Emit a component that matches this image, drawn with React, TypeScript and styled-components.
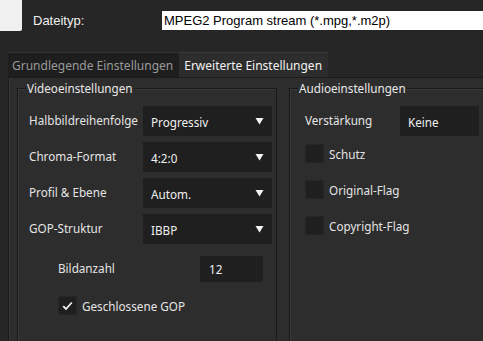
import styled, { createGlobalStyle } from "styled-components";

const GlobalStyle = createGlobalStyle`
  html, body {
    margin: 0;
    padding: 0;
    background: #262626;
    overflow: hidden;
  }
  body {
    width: 483px;
    height: 341px;
    font-family: "Noto Sans", "Open Sans", sans-serif;
    font-size: 11.7px;
    color: #e4e4e4;
  }
`

const Window = styled.div`
  width: 483px;
  height: 341px;
  overflow: hidden;
  display: flex;
  flex-direction: column;
`

const Header = styled.div`
  height: 52px;
  flex-shrink: 0;
  display: flex;
  align-items: flex-start;
`

const Corner = styled.div`
  width: 22px;
  height: 31px;
  flex-shrink: 0;
  background: #f0f0f0;
  border-bottom-right-radius: 2px;
`

const HeaderLabel = styled.span`
  margin: 11px 0 0 11px;
  width: 129px;
  flex-shrink: 0;
  line-height: 19px;
  font-family: "Liberation Sans", Arial, sans-serif;
  font-size: 13px;
  color: #f0f0f0;
`

const FileType = styled.div`
  flex: 1;
  margin-top: 11px;
  height: 19px;
  padding-left: 2px;
  background: #ffffff;
  font-family: "Liberation Sans", Arial, sans-serif;
  font-size: 13px;
  line-height: 19px;
  color: #000;
  white-space: nowrap;
`

const TabBar = styled.div`
  display: flex;
  flex-shrink: 0;
  height: 25px;
  margin-left: 8px;
`

const Tab = styled.div<{ $active?: boolean }>`
  height: 25px;
  padding: 0 6px 0 ${p => (p.$active ? 5 : 4)}px;
  display: flex;
  align-items: center;
  white-space: nowrap;
  font-size: 12px;
  background: ${p => (p.$active ? "#2d2d2d" : "#1e1e1e")};
  color: ${p => (p.$active ? "#f2f2f2" : "#9a9a9a")};
  border-top: 1px solid ${p => (p.$active ? "#3a3a3a" : "#333")};
  box-sizing: border-box;
`

const Panel = styled.div`
  flex: 1;
  margin-left: 8px;
  background: #2d2d2d;
  border-left: 1px solid #1c1c1c;
  border-top: 1px solid #1c1c1c;
  box-shadow: inset 1px 0 0 #363636;
  display: flex;
  gap: 12px;
  padding: 2px 0 0 8px;
`

const Group = styled.fieldset<{ $width?: number; $pad: number }>`
  margin: 0;
  ${p => (p.$width ? `width: ${p.$width}px;` : "flex: 1;")}
  flex-shrink: 0;
  height: 320px;
  box-sizing: border-box;
  padding: 0 4px 0 ${p => p.$pad}px;
  border: 1px solid #1a1a1a;
  border-right: none;
  border-bottom: none;
  box-shadow: inset 1px 1px 0 #393939;
  display: flex;
  flex-direction: column;
  ${p => (p.$width ? "border-right: 1px solid #1a1a1a;" : "")}

  legend {
    margin-left: ${p => 8 - p.$pad}px;
  }
`

const Legend = styled.legend`
  padding: 0 1px;
  line-height: 16px;
  font-size: 11.7px;
  color: #e8e8e8;
  background: #2d2d2d;
`

const Rows = styled.div`
  display: flex;
  flex-direction: column;
  gap: 6px;
  padding-top: 10px;
`

const Row = styled.div<{ $indent?: number; $top?: number }>`
  display: flex;
  align-items: center;
  margin-left: ${p => p.$indent ?? 0}px;
  margin-top: ${p => p.$top ?? 0}px;
`

const Label = styled.span<{ $width: number }>`
  width: ${p => p.$width}px;
  flex-shrink: 0;
  white-space: nowrap;
  margin-top: -3px;
`

const Select = styled.div<{ $grow?: boolean }>`
  ${p => (p.$grow ? "flex: 1;" : "width: 129px;")}
  height: 30px;
  box-sizing: border-box;
  padding: 0 8px 0 8px;
  background: #1f1f1f;
  display: flex;
  align-items: center;
  justify-content: space-between;
  color: #f0f0f0;
  span {
    margin-top: 2px;
  }
`

const NumberBox = styled.div`
  width: 63px;
  height: 26px;
  box-sizing: border-box;
  padding-left: 9px;
  background: #1f1f1f;
  display: flex;
  align-items: center;
  color: #f0f0f0;
`

const CheckRow = styled.div<{ $indent?: number; $top?: number }>`
  display: flex;
  align-items: center;
  gap: 5px;
  height: 19px;
  margin-left: ${p => p.$indent ?? 0}px;
  margin-top: ${p => p.$top ?? 0}px;
`

const Box = styled.div`
  width: 19px;
  height: 19px;
  box-sizing: border-box;
  background: #1f1f1f;
  border: 1px solid #262626;
  display: flex;
  align-items: center;
  justify-content: center;
`

const CheckList = styled.div`
  display: flex;
  flex-direction: column;
  gap: 17px;
  margin-top: 2px;
`

function Arrow() {
  return (
    <svg width="9" height="8" viewBox="0 0 9 8">
      <path d="M0.5 1 L8.5 1 L4.5 7.5 Z" fill="#f4f4f4" />
    </svg>
  )
}

function Check({ checked }: { checked?: boolean }) {
  return (
    <Box>
      {checked && (
        <svg width="11" height="10" viewBox="0 0 11 10">
          <path d="M1.2 5.2 L4 8 L9.8 1.5" stroke="#f2f2f2" strokeWidth="1.8" fill="none" />
        </svg>
      )}
    </Box>
  )
}

export default function App() {
  return (
    <Window>
      <GlobalStyle />
      <Header>
        <Corner />
        <HeaderLabel>Dateityp:</HeaderLabel>
        <FileType>MPEG2 Program stream (*.mpg,*.m2p)</FileType>
      </Header>

      <TabBar>
        <Tab>Grundlegende Einstellungen</Tab>
        <Tab $active>Erweiterte Einstellungen</Tab>
      </TabBar>

      <Panel>
        <Group $width={260} $pad={11}>
          <Legend>Videoeinstellungen</Legend>
          <Rows>
            <Row>
              <Label $width={114}>Halbbildreihenfolge</Label>
              <Select><span>Progressiv</span><Arrow /></Select>
            </Row>
            <Row>
              <Label $width={114}>Chroma-Format</Label>
              <Select><span>4:2:0</span><Arrow /></Select>
            </Row>
            <Row>
              <Label $width={114}>Profil &amp; Ebene</Label>
              <Select><span>Autom.</span><Arrow /></Select>
            </Row>
            <Row>
              <Label $width={114}>GOP-Struktur</Label>
              <Select><span>IBBP</span><Arrow /></Select>
            </Row>
            <Row $indent={29} $top={6}>
              <Label $width={142}>Bildanzahl</Label>
              <NumberBox>12</NumberBox>
            </Row>
            <CheckRow $indent={29} $top={8}>
              <Check checked />
              <span>Geschlossene GOP</span>
            </CheckRow>
          </Rows>
        </Group>

        <Group $pad={15}>
          <Legend>Audioeinstellungen</Legend>
          <Rows>
            <Row>
              <Label $width={95}>Verstärkung</Label>
              <Select $grow><span>Keine</span></Select>
            </Row>
            <CheckList>
              <CheckRow><Check /><span>Schutz</span></CheckRow>
              <CheckRow><Check /><span>Original-Flag</span></CheckRow>
              <CheckRow><Check /><span>Copyright-Flag</span></CheckRow>
            </CheckList>
          </Rows>
        </Group>
      </Panel>
    </Window>
  )
}
